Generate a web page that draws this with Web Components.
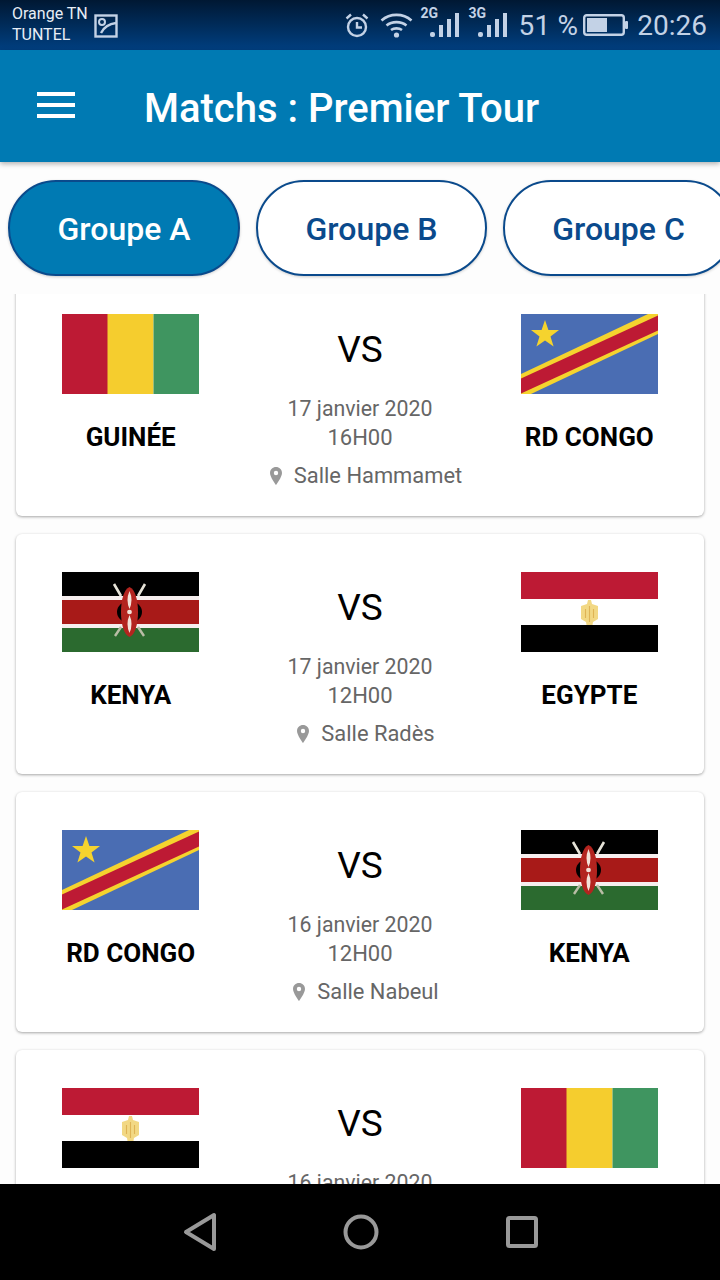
<!DOCTYPE html>
<html lang="fr">
<head>
<meta charset="utf-8">
<title>Matchs : Premier Tour</title>
<style>
  html, body { margin: 0; padding: 0; }
  body {
    width: 720px;
    height: 1280px;
    overflow: hidden;
    display: flex;
    flex-direction: column;
    background: #fdfdfd;
    font-family: Roboto, "Liberation Sans", sans-serif;
  }
  match-list { flex: 1; min-height: 0; }
</style>
</head>
<body>
  <status-bar></status-bar>
  <app-bar>Matchs : Premier Tour</app-bar>
  <group-tabs>
    <group-pill active>Groupe A</group-pill>
    <group-pill>Groupe B</group-pill>
    <group-pill>Groupe C</group-pill>
  </group-tabs>
  <match-list>
    <match-card home="guinee" away="congo">
      <span slot="home-name">GUINÉE</span>
      <span slot="away-name">RD CONGO</span>
      <span slot="date">17 janvier 2020</span>
      <span slot="time">16H00</span>
      <span slot="venue">Salle Hammamet</span>
    </match-card>
    <match-card home="kenya" away="egypte">
      <span slot="home-name">KENYA</span>
      <span slot="away-name">EGYPTE</span>
      <span slot="date">17 janvier 2020</span>
      <span slot="time">12H00</span>
      <span slot="venue">Salle Radès</span>
    </match-card>
    <match-card home="congo" away="kenya">
      <span slot="home-name">RD CONGO</span>
      <span slot="away-name">KENYA</span>
      <span slot="date">16 janvier 2020</span>
      <span slot="time">12H00</span>
      <span slot="venue">Salle Nabeul</span>
    </match-card>
    <match-card home="egypte" away="guinee">
      <span slot="date">16 janvier 2020</span>
    </match-card>
  </match-list>
  <nav-bar></nav-bar>

<script>
// flags, all drawn on the same 137x80 box
const FLAGS = {
  guinee: `
    <rect width="46" height="80" fill="#bd1a34"/>
    <rect x="45.5" width="46" height="80" fill="#f5cd2e"/>
    <rect x="91.5" width="45.5" height="80" fill="#3f9560"/>`,
  congo: `
    <rect width="137" height="80" fill="#4a6db3"/>
    <polygon points="0,60 127,0 137,0 137,20 10,80 0,80" fill="#f5d32e"/>
    <polygon points="0,64.5 137,1.5 137,16.5 0,79.5" fill="#bd1a34"/>
    <polygon points="24,6 27.4,16 38,16 29.5,22.4 32.6,32.5 24,26.4 15.4,32.5 18.5,22.4 10,16 20.6,16" fill="#f5d32e"/>`,
  kenya: `
    <rect width="137" height="24" fill="#000"/>
    <rect y="24" width="137" height="32" fill="#f6eeee"/>
    <rect y="28" width="137" height="24" fill="#a81a18"/>
    <rect y="56" width="137" height="24" fill="#2b6a2f"/>
    <path d="M52 12 L59 24 M83 12 L76 24" stroke="#e6e3d8" stroke-width="2.6"/>
    <path d="M53 64 L59 55 M82 64 L76 55" stroke="#b9bda6" stroke-width="2.4"/>
    <ellipse cx="67.5" cy="40" rx="12.5" ry="11" fill="#000"/>
    <path d="M67.5 15 C73 17 76 28 76 40 C76 52 73 63 67.5 65 C62 63 59 52 59 40 C59 28 62 17 67.5 15 Z" fill="#b3241f"/>
    <path d="M67.5 19 Q71.5 28 67.5 37 Q63.5 28 67.5 19 Z M67.5 43 Q71.5 52 67.5 61 Q63.5 52 67.5 43 Z" fill="#f3e2d8"/>
    <ellipse cx="67.5" cy="40" rx="2.4" ry="2.2" fill="#f3e2d8"/>`,
  egypte: `
    <rect width="137" height="27" fill="#bd1a34"/>
    <rect y="27" width="137" height="26" fill="#fff"/>
    <rect y="53" width="137" height="27" fill="#000"/>
    <polygon points="60,34 66,32 67,28 70,28 71,32 77,34 77,47 72,50 71.5,53 65.5,53 65,50 60,47" fill="#f2d884"/>
    <path d="M68.5 34 V50 M64.5 37 V46 M72.5 37 V46" stroke="#dfb455" stroke-width="1.1"/>`
};

const SIGNAL = `
  <svg width="29" height="24" viewBox="0 0 29 24" fill="#c3d2e6">
    <rect y="19" width="5" height="5" rx="2"/>
    <rect x="9" y="12" width="4" height="12"/>
    <rect x="17" y="6" width="4" height="18"/>
    <rect x="25" width="4" height="24"/>
  </svg>`;

class StatusBar extends HTMLElement {
  constructor() {
    super();
    this.attachShadow({ mode: 'open' });
    this.shadowRoot.innerHTML = `
      <style>
        :host {
          display: flex;
          flex: none;
          height: 50px;
          align-items: center;
          justify-content: space-between;
          padding: 0 13px 0 12px;
          box-sizing: border-box;
          background: linear-gradient(#001833, #003f80);
          color: #c3d2e6;
          font-family: Roboto, "Liberation Sans", sans-serif;
        }
        .left, .right { display: flex; align-items: center; }
        .carrier { font-size: 16px; line-height: 21px; color: #e8eef6; margin-top: -3px; }
        .carrier div { white-space: nowrap; }
        .photo { margin-left: 6px; margin-top: 2px; }
        .alarm { margin-right: 10px; }
        .wifi { margin-right: 8px; }
        .net { position: relative; width: 48px; height: 40px; }
        .net b {
          position: absolute;
          left: 0;
          top: 1px;
          font-size: 14px;
          line-height: 14px;
          color: #c3d2e6;
        }
        .net svg { position: absolute; left: 9px; top: 8px; }
        .net.second { width: 38px; margin-right: 12px; }
        .pct { font-size: 28px; margin-right: 5px; white-space: nowrap; letter-spacing: .2px; }
        .clock { font-size: 28px; margin-left: 9px; }
      </style>
      <div class="left">
        <div class="carrier"><div>Orange TN</div><div>TUNTEL</div></div>
        <svg class="photo" width="24" height="24" viewBox="0 0 24 24" fill="none" stroke="#c3d2e6">
          <rect x="1.5" y="1.5" width="21" height="21" stroke-width="2.4"/>
          <circle cx="8" cy="8" r="3" stroke-width="2"/>
          <path d="M7 19 C10 13 14 10 22 9" stroke-width="2.4"/>
        </svg>
      </div>
      <div class="right">
        <svg class="alarm" width="26" height="26" viewBox="0 0 26 26" fill="none" stroke="#c3d2e6" stroke-width="2.4">
          <circle cx="13" cy="15" r="9"/>
          <path d="M13 10 V15.5 H18"/>
          <path d="M2.5 6.5 L7 2.5 M23.5 6.5 L19 2.5"/>
        </svg>
        <svg class="wifi" width="33" height="26" viewBox="0 0 33 26" fill="none" stroke="#c3d2e6" stroke-width="2.6">
          <path d="M1.5 8.5 C10 1 23 1 31.5 8.5"/>
          <path d="M6.5 13.5 C12 9 21 9 26.5 13.5"/>
          <path d="M11 18 C14 15.8 19 15.8 22 18"/>
          <circle cx="16.5" cy="23" r="2.6" fill="#c3d2e6" stroke="none"/>
        </svg>
        <div class="net"><b>2G</b>${SIGNAL}</div>
        <div class="net second"><b>3G</b>${SIGNAL}</div>
        <span class="pct">51 %</span>
        <svg width="45" height="24" viewBox="0 0 45 24" fill="none">
          <rect x="1.2" y="2.2" width="39.6" height="19.6" rx="2.5" stroke="#c3d2e6" stroke-width="2.4"/>
          <rect x="4" y="5" width="20" height="14" fill="#c3d2e6"/>
          <rect x="42" y="8" width="3" height="8" rx="1" fill="#c3d2e6"/>
        </svg>
        <span class="clock">20:26</span>
      </div>`;
  }
}

class AppBar extends HTMLElement {
  constructor() {
    super();
    this.attachShadow({ mode: 'open' });
    this.shadowRoot.innerHTML = `
      <style>
        :host {
          display: flex;
          flex: none;
          position: relative;
          height: 112px;
          align-items: center;
          background: #007ab3;
          box-shadow: 0 2px 5px rgba(0, 0, 0, .3);
          color: #fff;
          font-family: Roboto, "Liberation Sans", sans-serif;
          z-index: 1;
        }
        .menu {
          display: flex;
          flex-direction: column;
          gap: 7px;
          width: 38px;
          margin: -2px 69px 0 37px;
        }
        .menu i { display: block; height: 4px; background: #fff; }
        h1 { margin: 6px 0 0; font-size: 40px; font-weight: 500; line-height: 1; white-space: nowrap; }
      </style>
      <div class="menu"><i></i><i></i><i></i></div>
      <h1><slot></slot></h1>`;
  }
}

class GroupTabs extends HTMLElement {
  constructor() {
    super();
    this.attachShadow({ mode: 'open' });
    this.shadowRoot.innerHTML = `
      <style>
        :host {
          display: flex;
          flex: none;
          gap: 16px;
          padding: 18px 0 18px 8px;
          overflow: hidden;
        }
      </style>
      <slot></slot>`;
  }
}

class GroupPill extends HTMLElement {
  constructor() {
    super();
    this.attachShadow({ mode: 'open' });
    this.shadowRoot.innerHTML = `
      <style>
        :host {
          display: flex;
          flex: none;
          width: 231px;
          height: 96px;
          box-sizing: border-box;
          padding-top: 2px;
          align-items: center;
          justify-content: center;
          border: 2px solid #0a4a8c;
          border-radius: 48px;
          background: #fff;
          color: #0a4a8c;
          font-size: 32px;
          font-weight: 500;
          box-shadow: 0 1px 3px rgba(0, 0, 0, .2);
          font-family: Roboto, "Liberation Sans", sans-serif;
        }
        :host([active]) {
          width: 232px;
          background: #007ab3;
          color: #fff;
        }
      </style>
      <slot></slot>`;
  }
}

class MatchList extends HTMLElement {
  constructor() {
    super();
    this.attachShadow({ mode: 'open' });
    this.shadowRoot.innerHTML = `
      <style>
        :host { display: block; overflow: hidden; }
        /* first card is scrolled partly under the tabs */
        .scroll {
          display: flex;
          flex-direction: column;
          gap: 18px;
          padding: 0 16px;
          margin-top: -18px;
        }
      </style>
      <div class="scroll"><slot></slot></div>`;
  }
}

class MatchCard extends HTMLElement {
  constructor() {
    super();
    this.attachShadow({ mode: 'open' });
  }

  connectedCallback() {
    const home = this.getAttribute('home');
    const away = this.getAttribute('away');
    this.shadowRoot.innerHTML = `
      <style>
        :host {
          display: grid;
          grid-template-columns: repeat(3, 1fr);
          height: 240px;
          box-sizing: border-box;
          padding-top: 38px;
          background: #fff;
          border-radius: 6px;
          box-shadow: 0 1px 3px rgba(0, 0, 0, .35);
          font-family: Roboto, "Liberation Sans", sans-serif;
          text-align: center;
          flex: none;
        }
        .team { display: flex; flex-direction: column; align-items: center; }
        svg.flag { display: block; width: 137px; height: 80px; }
        .name {
          margin-top: 26px;
          font-size: 26px;
          font-weight: 700;
          line-height: 34px;
          color: #000;
          white-space: nowrap;
        }
        .vs { font-size: 37px; line-height: 46px; margin-top: 13px; color: #000; }
        .when {
          font-size: 22px;
          line-height: 29px;
          color: #666;
          white-space: nowrap;
        }
        .when.date { margin-top: 21px; font-size: 21.3px; }
        .venue {
          display: flex;
          align-items: center;
          justify-content: center;
          gap: 12px;
          margin: 9px 0 0 12px;
          font-size: 21.9px;
          line-height: 29px;
          color: #666;
          white-space: nowrap;
        }
      </style>
      <div class="team">
        <svg class="flag" viewBox="0 0 137 80">${FLAGS[home]}</svg>
        <div class="name"><slot name="home-name"></slot></div>
      </div>
      <div>
        <div class="vs">VS</div>
        <div class="when date"><slot name="date"></slot></div>
        <div class="when"><slot name="time"></slot></div>
        <div class="venue">
          <svg width="12" height="18" viewBox="0 0 12 18"><path fill-rule="evenodd" fill="#999" d="M6 0 C2.7 0 0 2.6 0 5.9 C0 10 6 18 6 18 C6 18 12 10 12 5.9 C12 2.6 9.3 0 6 0 Z M6 3.8 A2.2 2.2 0 1 1 6 8.2 A2.2 2.2 0 1 1 6 3.8 Z"/></svg>
          <span><slot name="venue"></slot></span>
        </div>
      </div>
      <div class="team">
        <svg class="flag" viewBox="0 0 137 80">${FLAGS[away]}</svg>
        <div class="name"><slot name="away-name"></slot></div>
      </div>`;
  }
}

class NavBar extends HTMLElement {
  constructor() {
    super();
    this.attachShadow({ mode: 'open' });
    this.shadowRoot.innerHTML = `
      <style>
        :host {
          display: flex;
          flex: none;
          height: 96px;
          align-items: center;
          justify-content: center;
          gap: 126px;
          padding-left: 2px;
          box-sizing: border-box;
          background: #000;
          position: relative;
        }
        svg { display: block; fill: none; stroke: #999; stroke-width: 4; stroke-linejoin: round; }
      </style>
      <svg width="34" height="40" viewBox="0 0 34 40"><path d="M31 3 V37 L3 20 Z"/></svg>
      <svg width="36" height="36" viewBox="0 0 36 36"><circle cx="18" cy="18" r="15.5"/></svg>
      <svg width="34" height="34" viewBox="0 0 34 34"><rect x="3" y="3" width="28" height="28" rx="1.5"/></svg>`;
  }
}

customElements.define('status-bar', StatusBar);
customElements.define('app-bar', AppBar);
customElements.define('group-tabs', GroupTabs);
customElements.define('group-pill', GroupPill);
customElements.define('match-list', MatchList);
customElements.define('match-card', MatchCard);
customElements.define('nav-bar', NavBar);
</script>
</body>
</html>
